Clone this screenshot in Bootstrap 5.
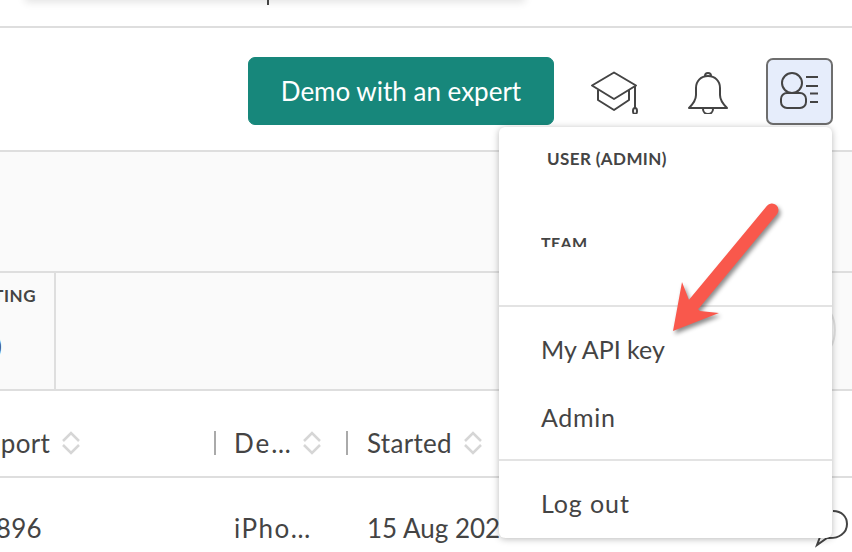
<!DOCTYPE html>
<html lang="en">
<head>
    <meta charset="UTF-8">
    <meta name="viewport" content="width=device-width, initial-scale=1.0">
    <title>Sessions</title>
    <link href="https://cdn.jsdelivr.net/npm/bootstrap@5.3.3/dist/css/bootstrap.min.css" rel="stylesheet">
    <style>
        html, body { height: 100%; overflow: hidden; }
        body { font-family: "Lato", "Liberation Sans", sans-serif; font-size: 25px; color: #444; background: #fff; position: relative; }
        .band-line { border-bottom: 2px solid #dedede; }
        .top-strip { height: 28px; }
        .top-header { height: 124px; padding: 4px 19px 0 0; gap: 36px; }
        .demo-btn { width: 306px; height: 68px; background: #17877b; border-color: #17877b; color: #fff; font-size: 26px; border-radius: 7px; }
        .user-btn { width: 67px; height: 67px; margin-left: -1px; padding: 0; background: #e6edfb; border: 2px solid #6e6e6e; border-radius: 7px; }
        .grey-band { height: 121px; background: #fafafa; }
        .stats-band { height: 118px; background: #fafafa; }
        .stat-cell { width: 56px; height: 100%; border-right: 2px solid #dedede; padding: 12px 18px 0 0; white-space: nowrap; }
        .stat-label { font-size: 17px; font-weight: 700; letter-spacing: .5px; line-height: 22px; }
        .stat-value { line-height: 34px; margin-top: 21px; margin-right: 34px; }
        .round-btn { position: absolute; left: 805px; top: 305px; width: 31px; height: 50px; border: 2px solid #e2e2e2; border-radius: 50%; }
        .head-row { height: 87px; padding-top: 18px; font-size: 26px; letter-spacing: .3px; }
        .body-row { height: 100px; padding-top: 31px; font-size: 26px; letter-spacing: .3px; }
        .col-report { flex: none; }
        .head-row .col-report { width: 245px; margin-left: -29px; }
        .body-row .col-report { width: 269px; margin-left: -35px; }
        .col-device { flex: none; }
        .head-row .col-device { width: 132px; padding-left: 18px; }
        .body-row .col-device { width: 133px; letter-spacing: 1.5px; }
        .col-started { flex: none; white-space: nowrap; }
        .head-row .col-started { padding-left: 19px; }
        .body-row .col-started { letter-spacing: 0; }
        .head-cell { height: 24px; line-height: 24px; }
        .sort-gap { gap: 12px; }
        .col-sep { border-right: 2px solid #aaa; }
        .sort-ic { width: 18px; height: 24px; flex: none; }
        .cell-text { width: 69px; letter-spacing: 2px; }
        .top-card { position: absolute; left: 25px; top: -10px; width: 500px; height: 10px; background: #fff; box-shadow: 0 2px 8px rgba(0,0,0,.12); }
        .top-tick { position: absolute; left: 267px; top: 0; width: 2px; height: 5px; background: #444; }
        .user-menu.dropdown-menu { left: 499px; top: 127px; width: 333px; height: 411px; padding: 0; border: 0; border-radius: 6px; font-size: 25px; color: #444; box-shadow: 0 1px 7px rgba(0,0,0,.28); }
        .menu-head { font-size: 17px; font-weight: 700; letter-spacing: .4px; line-height: 22px; color: #444; }
        .head-user { padding: 21px 0 0 48px; height: 95px; }
        .head-team { padding: 10px 0 0 42px; height: 83px; overflow: hidden; font-size: 16px; }
        .head-team span { display: block; height: 15px; overflow: hidden; }
        .user-menu .dropdown-divider { margin: 0; border-top: 2px solid #e3e3e3; opacity: 1; }
        .user-menu .dropdown-item { color: #444; padding: 0 0 0 42px; line-height: 34px; }
        .item-api { margin-top: 25px; }
        .item-admin { margin-top: 34px; letter-spacing: .7px; }
        .item-logout { margin-top: 25px; letter-spacing: .9px; }
        .gap-admin { height: 25px; }
        .chat-ic { position: absolute; left: 810px; top: 508px; width: 42px; height: 44px; }
        .red-arrow { position: absolute; left: 660px; top: 195px; width: 130px; height: 150px; z-index: 1100; filter: drop-shadow(2px 3px 2px rgba(0,0,0,.45)); }
    </style>
</head>
<body>
<div class="top-card"></div>
<div class="top-tick"></div>

<div class="top-strip band-line"></div>

<!-- Header -->
<div class="top-header band-line d-flex justify-content-end align-items-center">
    <button type="button" class="btn demo-btn">Demo with an expert</button>
    <svg width="59" height="46" viewBox="590 66 59 46" fill="none" stroke="#444" stroke-width="2" stroke-linejoin="round">
        <path d="M592 83.500 614 70.500 636 83.500 614 97z"/>
        <path d="M598 88v10l16 10 15-10V88"/>
        <path d="M635 84v22"/>
        <ellipse cx="635" cy="109" rx="2" ry="3"/>
    </svg>
    <svg width="46" height="46" viewBox="685 66 46 46" fill="none" stroke="#444" stroke-width="2" stroke-linejoin="round">
        <path d="M689 106c4-4 7-8 7-13v-7c0-7 5-12 12-12s12 5 12 12v7c0 5 3 9 7 13z"/>
        <path d="M705 74a3 3 0 0 1 6 0"/>
        <path d="M703 107a5 5 0 0 0 10 0"/>
    </svg>
    <button type="button" class="btn user-btn d-flex align-items-center justify-content-center">
        <svg width="44" height="44" viewBox="778 69 44 44" fill="none" stroke="#444" stroke-width="2">
            <circle cx="792" cy="83" r="10"/>
            <rect x="781" y="93" width="25" height="15" rx="6"/>
            <path d="M806 77h12M806 86h12M810 93.500h8M810 102h8"/>
        </svg>
    </button>
</div>

<div class="grey-band band-line"></div>

<!-- Stats -->
<div class="stats-band band-line d-flex">
    <div class="stat-cell d-flex flex-column align-items-end">
        <div class="stat-label">REPORTING</div>
        <div class="stat-value">(0)</div>
    </div>
</div>
<div class="round-btn"></div>

<!-- Table head -->
<div class="head-row band-line d-flex align-items-center">
    <div class="col-report head-cell col-sep d-flex sort-gap">
        <span>Report</span>
        <svg class="sort-ic" viewBox="0 0 18 24" fill="none" stroke="#d6d6d6" stroke-width="2.500"><path d="M1 10l8-8 8 8M1 14l8 8 8-8"/></svg>
    </div>
    <div class="col-device head-cell col-sep d-flex">
        <span class="cell-text">De…</span>
        <svg class="sort-ic" viewBox="0 0 18 24" fill="none" stroke="#d6d6d6" stroke-width="2.500"><path d="M1 10l8-8 8 8M1 14l8 8 8-8"/></svg>
    </div>
    <div class="col-started head-cell d-flex sort-gap">
        <span>Started</span>
        <svg class="sort-ic" viewBox="0 0 18 24" fill="none" stroke="#d6d6d6" stroke-width="2.500"><path d="M1 10l8-8 8 8M1 14l8 8 8-8"/></svg>
    </div>
</div>

<!-- Table row -->
<div class="body-row d-flex">
    <div class="col-report">12896</div>
    <div class="col-device">iPho…</div>
    <div class="col-started">15 Aug 2023</div>
</div>

<svg class="chat-ic" viewBox="810 508 42 44" fill="none" stroke="#444" stroke-width="2">
    <path d="M833 511c9 0 14 6 14 13 0 9-8 15-20 14l-10 7 3-8"/>
</svg>

<!-- User menu -->
<div class="dropdown-menu show user-menu">
    <div class="menu-head head-user">USER (ADMIN)</div>
    <div class="menu-head head-team"><span>TEAM</span></div>
    <hr class="dropdown-divider">
    <a class="dropdown-item item-api" href="#">My API key</a>
    <a class="dropdown-item item-admin" href="#">Admin</a>
    <div class="gap-admin"></div>
    <hr class="dropdown-divider">
    <a class="dropdown-item item-logout" href="#">Log out</a>
</div>

<svg class="red-arrow" viewBox="660 195 130 150">
    <path d="M772 210 694 304" fill="none" stroke="#f9584c" stroke-width="13" stroke-linecap="round"/>
    <path d="M682 282 689 300 700 311 719 313 673 331z" fill="#f9584c"/>
</svg>

<script src="https://cdn.jsdelivr.net/npm/bootstrap@5.3.3/dist/js/bootstrap.bundle.min.js"></script>
</body>
</html>
